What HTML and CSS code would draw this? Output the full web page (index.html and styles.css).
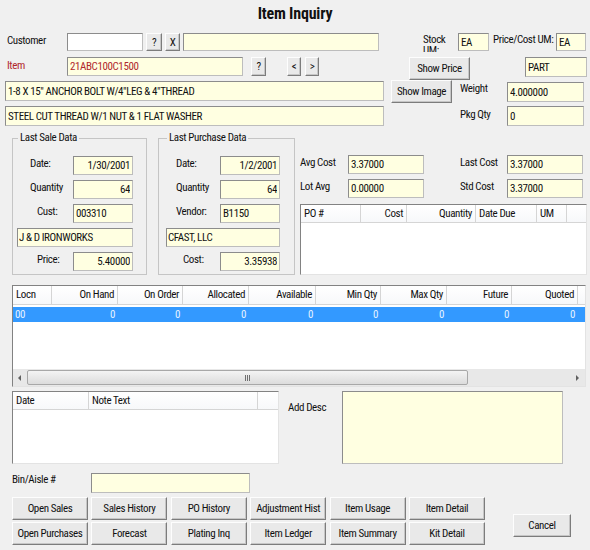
FILE: index.html
```html
<!DOCTYPE html>
<html lang="en">

<head>
  <meta charset="UTF-8">
  <title>Item Inquiry</title>
  <link rel="stylesheet" href="styles.css">
</head>

<body>
  <div class="title">Item Inquiry</div>

  <!-- customer row -->
  <div class="row r1">
    <div class="lbl lbl-left">Customer</div>
    <input class="white w-cust" value="">
    <button class="btn b-q1">?</button>
    <button class="btn b-x">X</button>
    <input class="w-custname" value="">
    <div class="lbl two-line stock">Stock UM:</div>
    <input class="w-um1" value="EA">
    <div class="lbl two-line pcum">Price/Cost UM:</div>
    <input class="w-um2" value="EA">
  </div>

  <!-- item row -->
  <div class="row r2">
    <div class="lbl lbl-left red">Item</div>
    <input class="w-item red" value="21ABC100C1500">
    <button class="btn b-q2">?</button>
    <button class="btn b-prev">&lt;</button>
    <button class="btn b-next">&gt;</button>
    <button class="btn b-price">Show Price</button>
    <input class="w-part" value="PART">
  </div>

  <div class="row r3">
    <input class="w-desc" value="1-8 X 15&quot; ANCHOR BOLT W/4&quot;LEG &amp; 4&quot;THREAD">
    <button class="btn b-image">Show Image</button>
    <div class="lbl side-lbl">Weight</div>
    <input class="w-side" value="4.000000">
  </div>

  <div class="row r4">
    <input class="w-desc" value="STEEL CUT THREAD W/1 NUT &amp; 1 FLAT WASHER">
    <div class="lbl side-lbl gap-pkg">Pkg Qty</div>
    <input class="w-side" value="0">
  </div>

  <!-- last sale / last purchase / costs -->
  <div class="row middle">
    <fieldset class="grp sale">
      <legend>Last Sale Data</legend>
      <div class="frow first">
        <div class="lbl">Date:</div>
        <input class="num" value="1/30/2001">
      </div>
      <div class="frow">
        <div class="lbl">Quantity</div>
        <input class="num" value="64">
      </div>
      <div class="frow">
        <div class="lbl ind">Cust:</div>
        <input value="003310">
      </div>
      <div class="frow">
        <input class="wide" value="J &amp; D IRONWORKS">
      </div>
      <div class="frow">
        <div class="lbl ind">Price:</div>
        <input class="num" value="5.40000">
      </div>
    </fieldset>

    <fieldset class="grp purchase">
      <legend>Last Purchase Data</legend>
      <div class="frow first">
        <div class="lbl">Date:</div>
        <input class="num" value="1/2/2001">
      </div>
      <div class="frow">
        <div class="lbl">Quantity</div>
        <input class="num" value="64">
      </div>
      <div class="frow">
        <div class="lbl">Vendor:</div>
        <input value="B1150">
      </div>
      <div class="frow">
        <input class="wide" value="CFAST, LLC">
      </div>
      <div class="frow">
        <div class="lbl ind">Cost:</div>
        <input class="num" value="3.35938">
      </div>
    </fieldset>

    <div class="costs">
      <div class="crow first">
        <div class="lbl c-lbl">Avg Cost</div>
        <input class="c-in" value="3.37000">
        <div class="lbl c-lbl c-right">Last Cost</div>
        <input class="c-in" value="3.37000">
      </div>
      <div class="crow">
        <div class="lbl c-lbl">Lot Avg</div>
        <input class="c-in" value="0.00000">
        <div class="lbl c-lbl c-right">Std Cost</div>
        <input class="c-in" value="3.37000">
      </div>
      <div class="list po">
        <div class="hdr po-cols">
          <div>PO #</div>
          <div class="r">Cost</div>
          <div class="r">Quantity</div>
          <div>Date Due</div>
          <div>UM</div>
          <div></div>
        </div>
      </div>
    </div>
  </div>

  <!-- stock by location -->
  <div class="list stock-grid">
    <div class="hdr loc-cols">
      <div>Locn</div>
      <div class="r">On Hand</div>
      <div class="r">On Order</div>
      <div class="r">Allocated</div>
      <div class="r">Available</div>
      <div class="r">Min Qty</div>
      <div class="r">Max Qty</div>
      <div class="r">Future</div>
      <div class="r">Quoted</div>
      <div></div>
    </div>
    <div class="sel loc-cols">
      <div>00</div>
      <div class="r">0</div>
      <div class="r">0</div>
      <div class="r">0</div>
      <div class="r">0</div>
      <div class="r">0</div>
      <div class="r">0</div>
      <div class="r">0</div>
      <div class="r">0</div>
      <div></div>
    </div>
    <div class="spacer"></div>
    <div class="hscroll">
      <div class="arrow left"></div>
      <div class="track">
        <div class="thumb"><span class="grip"></span></div>
      </div>
      <div class="arrow right"></div>
    </div>
  </div>

  <!-- notes -->
  <div class="row notes-row">
    <div class="list notes">
      <div class="hdr note-cols">
        <div>Date</div>
        <div>Note Text</div>
        <div></div>
      </div>
    </div>
    <div class="lbl add-lbl">Add Desc</div>
    <div class="add-desc"></div>
  </div>

  <div class="row bin-row">
    <div class="lbl bin-lbl">Bin/Aisle #</div>
    <input class="w-bin" value="">
  </div>

  <div class="row actions">
    <div class="btn-grid">
      <button class="btn">Open Sales</button>
      <button class="btn">Sales History</button>
      <button class="btn">PO History</button>
      <button class="btn">Adjustment Hist</button>
      <button class="btn">Item Usage</button>
      <button class="btn">Item Detail</button>
      <button class="btn">Open Purchases</button>
      <button class="btn">Forecast</button>
      <button class="btn">Plating Inq</button>
      <button class="btn">Item Ledger</button>
      <button class="btn">Item Summary</button>
      <button class="btn">Kit Detail</button>
    </div>
    <button class="btn cancel">Cancel</button>
  </div>
</body>

</html>
```

FILE: styles.css
```css
*,
*::before,
*::after {
  box-sizing: border-box;
}

body {
  margin: 0;
  width: 590px;
  height: 550px;
  overflow: hidden;
  background: #f0f0f0;
  color: #111;
  font: 11px "Roboto Condensed", "Liberation Sans Narrow", "DejaVu Sans Condensed", sans-serif;
  letter-spacing: -0.4px;
}

.title {
  height: 28px;
  line-height: 28px;
  text-align: center;
  font-weight: bold;
  font-size: 16px;
  letter-spacing: -0.2px;
}

.row {
  display: flex;
  align-items: flex-start;
}

.lbl {
  flex: none;
  white-space: nowrap;
  line-height: 16px;
}

.red {
  color: #b0282d;
}

input {
  flex: none;
  height: 19px;
  margin: 0;
  padding: 0 2px;
  border: 1px solid;
  border-color: #8c8c8c #bdbdbd #bdbdbd #8c8c8c;
  background: #ffffe1;
  font: inherit;
  letter-spacing: inherit;
  color: #111;
  outline: none;
}

input.red {
  color: #b0282d;
}

input.white {
  background: #fff;
}

input.num {
  text-align: right;
}

.btn {
  flex: none;
  height: 19px;
  margin: 0;
  padding: 0;
  border: 1px solid;
  border-color: #fdfdfd #7c7c7c #7c7c7c #fdfdfd;
  box-shadow: inset -1px -1px 0 #c6c6c6;
  background: #e9e9e9;
  font: inherit;
  letter-spacing: inherit;
  color: #111;
  white-space: nowrap;
  overflow: hidden;
}

/* top rows */
.r1 {
  margin-top: 5px;
  height: 18px;
}

.r1 input {
  height: 18px;
}

.lbl-left {
  margin-left: 7px;
  width: 60px;
}

.w-cust {
  width: 76px;
}

.b-q1 {
  margin-left: 3px;
  width: 16px;
  height: 18px;
}

.b-x {
  margin-left: 3px;
  width: 15px;
  height: 18px;
}

.w-custname {
  margin-left: 3px;
  width: 196px;
}

.two-line {
  height: 19px;
  overflow: hidden;
  line-height: 11px;
  padding-top: 1px;
}

.stock {
  margin-left: 44px;
  width: 35px;
  white-space: normal;
}

.w-um1 {
  width: 31px;
}

.pcum {
  margin-left: 4px;
  width: 63px;
}

.w-um2 {
  width: 30px;
}

.r2 {
  margin-top: 6px;
  height: 24px;
}

.r2 .lbl {
  line-height: 17px;
}

.w-item {
  width: 176px;
}

.b-q2 {
  margin-left: 8px;
  width: 15px;
}

.b-prev {
  margin-left: 21px;
  width: 14px;
}

.b-next {
  margin-left: 4px;
  width: 14px;
}

.b-price {
  margin-left: 90px;
  width: 61px;
  height: 23px;
}

.w-part {
  margin-left: 55px;
  width: 62px;
  height: 20px;
}

.r3 {
  height: 25px;
}

.r4 {
  height: 20px;
}

.w-desc {
  margin-left: 5px;
  width: 379px;
  height: 20px;
}

.b-image {
  margin-left: 7px;
  width: 61px;
  height: 23px;
  margin-top: -1px;
}

.side-lbl {
  margin-left: 8px;
  width: 47px;
  line-height: 15px;
}

.gap-pkg {
  margin-left: 76px;
  line-height: 18px;
}

.w-side {
  width: 77px;
  height: 20px;
}

.r3 .w-side {
  margin-top: 1px;
}

/* group boxes */
.middle {
  margin-top: 6px;
  height: 143px;
}

.grp {
  flex: none;
  height: 143px;
  margin: 0;
  padding: 0 0 0 4px;
  border: 1px solid #c5c5c5;
}

.grp legend {
  margin-left: 1px;
  padding: 0 2px;
  line-height: 12px;
}

.sale {
  margin-left: 12px;
  width: 135px;
}

.purchase {
  margin-left: 11px;
  width: 137px;
  padding-left: 7px;
}

.frow {
  display: flex;
  height: 19px;
  margin-top: 5px;
}

.frow.first {
  margin-top: 12px;
}

.frow .lbl {
  width: 56px;
  padding-left: 13px;
  line-height: 15px;
}

.frow .lbl.ind {
  padding-left: 20px;
}

.frow input {
  width: 60px;
}

.frow input.wide {
  width: 116px;
  padding-left: 1px;
}

.purchase .frow .lbl {
  width: 54px;
  padding-left: 10px;
}

.purchase .frow .lbl.ind {
  padding-left: 17px;
}

.purchase .frow input.wide {
  width: 114px;
}

.costs {
  margin-left: 5px;
  width: 287px;
}

.crow {
  display: flex;
  height: 19px;
  margin-top: 5px;
}

.crow.first {
  margin-top: 23px;
}

.c-lbl {
  width: 48px;
  line-height: 15px;
}

.c-right {
  margin-left: 36px;
  width: 47px;
}

.c-in {
  width: 76px;
}

/* list views */
.list {
  background: #fff;
  border: 1px solid;
  border-color: #828282 #e3e3e3 #e3e3e3 #828282;
  overflow: hidden;
}

.hdr {
  display: grid;
  height: 18px;
  line-height: 17px;
  border-bottom: 1px solid #d5d5d5;
  background: linear-gradient(#fff, #f7f8fa);
  white-space: nowrap;
}

.hdr > div {
  padding: 0 3px;
  border-right: 1px solid #d5d5d5;
  overflow: hidden;
}

.hdr > div:last-child {
  border-right: none;
}

.r {
  text-align: right;
}

.po {
  margin-top: 6px;
  height: 71px;
}

.po-cols {
  grid-template-columns: 60px 46px 69px 61px 30px 1fr;
}

.stock-grid {
  display: flex;
  flex-direction: column;
  margin: 10px 0 0 12px;
  width: 574px;
  height: 102px;
}

.stock-grid .hdr {
  height: 19px;
  line-height: 18px;
  flex: none;
}

.loc-cols {
  display: grid;
  grid-template-columns: 39px 66px 65px 66px 67px 65px 66px 65px 66px 1fr;
}

.sel {
  flex: none;
  margin-top: 2px;
  height: 15px;
  line-height: 15px;
  background: #3399ff;
  color: #e6f2ff;
}

.sel > div {
  padding: 0 3px 0 2px;
}

.spacer {
  flex: 1;
}

.hscroll {
  flex: none;
  display: flex;
  align-items: center;
  height: 17px;
  background: #e8e8e8;
}

.arrow {
  flex: none;
  width: 14px;
  height: 17px;
  position: relative;
}

.arrow::before {
  content: "";
  position: absolute;
  top: 6px;
  left: 5px;
  border: 3px solid transparent;
}

.arrow.left::before {
  border-right-color: #606060;
  border-left-width: 0;
}

.arrow.right::before {
  border-left-color: #606060;
  border-right-width: 0;
}

.track {
  flex: 1;
  height: 17px;
  padding-right: 103px;
}

.thumb {
  height: 15px;
  margin-top: 1px;
  border: 1px solid #a8a8a8;
  border-radius: 2px;
  background: linear-gradient(#f4f4f4, #dcdcdc);
  display: flex;
  justify-content: center;
  align-items: center;
}

.grip {
  width: 6px;
  height: 6px;
  background: repeating-linear-gradient(90deg, #707070 0 1px, transparent 1px 2px);
}

/* notes + add desc */
.notes-row {
  margin-top: 4px;
  height: 73px;
}

.notes {
  flex: none;
  margin-left: 12px;
  width: 267px;
  height: 73px;
}

.note-cols {
  grid-template-columns: 76px 169px 1fr;
}

.add-lbl {
  margin-left: 9px;
  width: 54px;
  padding-top: 9px;
}

.add-desc {
  flex: none;
  width: 221px;
  height: 73px;
  background: #ffffe1;
  border: 1px solid;
  border-color: #8c8c8c #bdbdbd #bdbdbd #8c8c8c;
}

.bin-row {
  margin-top: 9px;
  height: 20px;
}

.bin-lbl {
  margin-left: 12px;
  width: 79px;
  line-height: 14px;
}

.w-bin {
  width: 159px;
  height: 20px;
}

/* buttons */
.actions {
  margin-top: 4px;
}

.btn-grid {
  display: grid;
  grid-template-columns: repeat(6, 76px);
  grid-auto-rows: 23px;
  column-gap: 3.4px;
  row-gap: 2px;
  margin-left: 12px;
}

.btn-grid .btn {
  height: 23px;
}

.cancel {
  margin: 17px 0 0 28px;
  width: 58px;
  height: 23px;
}
```
